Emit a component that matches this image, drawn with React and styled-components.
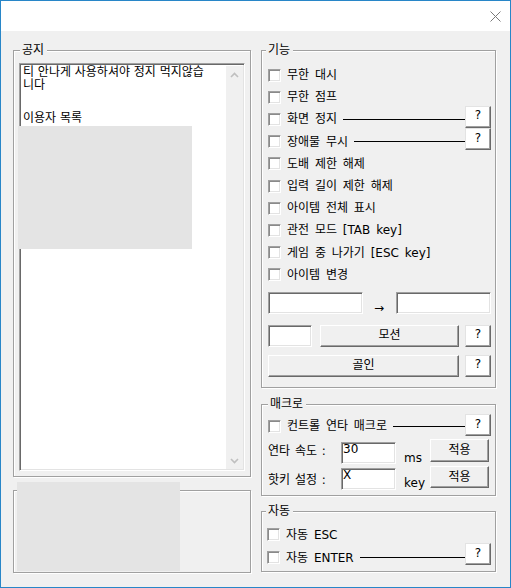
import React from 'react';
import styled, { createGlobalStyle } from 'styled-components';

const Global = createGlobalStyle`
  html, body { margin: 0; padding: 0; background: #fff; }
  body {
    font-family: "DejaVu Sans", "Noto Sans CJK KR", sans-serif;
    font-size: 12px;
    color: #000;
  }
  * { box-sizing: border-box; }
`;

const Window = styled.div`
  width: 511px;
  height: 588px;
  border: 1px solid #2886c8;
  display: flex;
  flex-direction: column;
  background: #f0f0f0;
  overflow: hidden;
`;

const TitleBar = styled.div`
  height: 30px;
  flex: none;
  background: #fff;
  display: flex;
  align-items: center;
  justify-content: flex-end;
  padding-right: 9px;
`;

const Body = styled.div`
  flex: 1;
  display: flex;
  gap: 10px;
  padding: 19px 0 0 12px;
`;

const Column = styled.div`
  display: flex;
  flex-direction: column;
  width: ${p => p.$w}px;
  flex: none;
`;

const Group = styled.div`
  position: relative;
  height: ${p => p.$h}px;
  margin-top: ${p => p.$mt || 0}px;
  border: 1px solid #a0a0a0;
  box-shadow: inset 1px 1px 0 #fff, 1px 1px 0 #fff;
  padding: ${p => p.$pad || '0'};
  display: flex;
  flex-direction: column;
  flex: none;
`;

const Legend = styled.span`
  position: absolute;
  top: -7px;
  left: ${p => p.$x}px;
  padding: 0 3px 0 2px;
  background: #f0f0f0;
  line-height: 12px;
  white-space: nowrap;
`;

const Redact = styled.div`
  position: absolute;
  left: ${p => p.$x}px;
  top: ${p => p.$y}px;
  width: ${p => p.$w}px;
  height: ${p => p.$h}px;
  background: #e4e4e4;
`;

const NoticeBox = styled.div`
  flex: 1;
  display: flex;
  background: #fff;
  border: 1px solid;
  border-color: #a0a0a0 #fff #fff #a0a0a0;
  box-shadow: inset 1px 1px 0 #696969, inset -1px -1px 0 #e3e3e3;
  padding: 2px 1px 1px 2px;
`;

const NoticeText = styled.div`
  flex: 1;
  padding: 0 0 0 1px;
  line-height: 13px;
  white-space: nowrap;
`;

const Para = styled.div`
  margin-top: ${p => p.$mt || 0}px;
`;

const ScrollBar = styled.div`
  width: 17px;
  flex: none;
  background: #f0f0f0;
  display: flex;
  flex-direction: column;
  justify-content: space-between;
`;

const ScrollArrow = styled.div`
  width: 17px;
  height: 17px;
  display: flex;
  align-items: center;
  justify-content: center;
`;

const CheckRow = styled.div`
  display: flex;
  align-items: center;
  height: ${p => p.$h || 22.2}px;
  flex: none;
`;

const Check = styled.span`
  width: 13px;
  height: 13px;
  flex: none;
  background: #fff;
  border: 1px solid;
  border-color: #a0a0a0 #fff #fff #a0a0a0;
  box-shadow: inset 1px 1px 0 #8a8a8a, inset -1px -1px 0 #e3e3e3;
`;

const Label = styled.span`
  margin-left: 6px;
  line-height: 12px;
  white-space: nowrap;
  word-spacing: 2px;
`;

const Rule = styled.span`
  flex: 1;
  height: 1px;
  background: #000;
  margin-left: 6px;
`;

const HelpButton = styled.div`
  width: 26px;
  height: 22px;
  flex: none;
  margin-bottom: ${p => p.$lift ?? 5}px;
  background: #fff;
  border: 1px solid;
  border-color: #e3e3e3 #696969 #696969 #e3e3e3;
  box-shadow: inset -1px -1px 0 #a0a0a0;
  display: flex;
  align-items: center;
  justify-content: center;
  line-height: 12px;
  padding-bottom: 3px;
`;

const PushButton = styled.div`
  width: ${p => p.$w}px;
  height: ${p => p.$h || 22}px;
  margin-top: ${p => p.$mt || 0}px;
  flex: none;
  background: #f0f0f0;
  border: 1px solid;
  border-color: #fff #696969 #696969 #fff;
  box-shadow: inset -1px -1px 0 #a0a0a0;
  display: flex;
  align-items: center;
  justify-content: center;
  line-height: 12px;
  padding-bottom: 1px;
`;

const Field = styled.div`
  width: ${p => p.$w}px;
  height: 22px;
  margin-top: ${p => p.$mt || 0}px;
  flex: none;
  background: #fff;
  border: 1px solid;
  border-color: #a0a0a0 #fff #fff #a0a0a0;
  box-shadow: inset 1px 1px 0 #696969, inset -1px -1px 0 #e3e3e3;
  padding: 1px 2px 0 1px;
  line-height: 10px;
`;

const Row = styled.div`
  display: flex;
  align-items: flex-start;
  gap: ${p => p.$gap || 0}px;
  height: ${p => p.$h}px;
  margin-top: ${p => p.$mt || 0}px;
  flex: none;
`;

const Arrow = styled.span`
  width: 33px;
  flex: none;
  align-self: flex-end;
  text-align: center;
  line-height: 12px;
  padding-right: 1px;
`;

const FieldLabel = styled.span`
  width: 73px;
  flex: none;
  margin-top: ${p => p.$mt}px;
  line-height: 12px;
  white-space: nowrap;
  word-spacing: 1px;
`;

const Unit = styled.span`
  width: 34px;
  flex: none;
  align-self: flex-end;
  margin-bottom: ${p => p.$mb}px;
  padding-left: 8px;
  line-height: 12px;
`;

const Chevron = ({ down }) => (
  <svg width="9" height="6" viewBox="0 0 9 6">
    <polyline
      points={down ? '1,1 4.5,4.5 8,1' : '1,5 4.5,1.5 8,5'}
      fill="none"
      stroke="#bfbfbf"
      strokeWidth="1.6"
    />
  </svg>
);

const CloseIcon = () => (
  <svg width="11" height="11" viewBox="0 0 11 11">
    <path d="M0.5 0.5 L10.5 10.5 M10.5 0.5 L0.5 10.5" stroke="#7a7a7a" strokeWidth="1" fill="none" />
  </svg>
);

const plainRows = [
  '무한 대시',
  '무한 점프',
  { t: '화면 정지', help: true },
  { t: '장애물 무시', help: true },
  '도배 제한 해제',
  '입력 길이 제한 해제',
  '아이템 전체 표시',
  '관전 모드 [TAB key]',
  '게임 중 나가기 [ESC key]',
  '아이템 변경',
];

export default function App() {
  return (
    <>
      <Global />
      <Window>
        <TitleBar>
          <CloseIcon />
        </TitleBar>
        <Body>
          <Column $w={238}>
            <Group $h={427} $pad="12px 5px 5px 5px">
              <Legend $x={6}>공지</Legend>
              <NoticeBox>
                <NoticeText>
                  <Para>
                    티 안나게 사용하셔야 정지 먹지않습
                    <br />
                    니다
                  </Para>
                  <Para $mt={20}>이용자 목록</Para>
                </NoticeText>
                <ScrollBar>
                  <ScrollArrow>
                    <Chevron />
                  </ScrollArrow>
                  <ScrollArrow>
                    <Chevron down />
                  </ScrollArrow>
                </ScrollBar>
              </NoticeBox>
              <Redact $x={4} $y={75} $w={174} $h={123} />
            </Group>
            <Group $h={83} $mt={13}>
              <Redact $x={3} $y={-9} $w={163} $h={89} />
            </Group>
          </Column>

          <Column $w={235}>
            <Group $h={338} $pad="13px 4px 10px 6px">
              <Legend $x={4}>기능</Legend>
              {plainRows.map((r, i) => {
                const t = typeof r === 'string' ? r : r.t;
                const help = typeof r !== 'string' && r.help;
                return (
                  <CheckRow key={i}>
                    <Check />
                    <Label>{t}</Label>
                    {help && (
                      <>
                        <Rule />
                        <HelpButton>?</HelpButton>
                      </>
                    )}
                  </CheckRow>
                );
              })}
              <Row $h={22} $mt={6}>
                <Field $w={95} />
                <Arrow>→</Arrow>
                <Field $w={95} />
              </Row>
              <Row $h={22} $mt={11}>
                <Field $w={44} />
                <PushButton $w={139} style={{ marginLeft: 8 }}>모션</PushButton>
                <HelpButton $lift={0} style={{ marginLeft: 6 }}>?</HelpButton>
              </Row>
              <Row $h={22} $mt={8} $gap={6}>
                <PushButton $w={191}>골인</PushButton>
                <HelpButton $lift={0}>?</HelpButton>
              </Row>
            </Group>

            <Group $h={92} $mt={16} $pad="10px 4px 5px 6px">
              <Legend $x={6}>매크로</Legend>
              <CheckRow $h={22}>
                <Check />
                <Label>컨트롤 연타 매크로</Label>
                <Rule />
                <HelpButton $lift={2}>?</HelpButton>
              </CheckRow>
              <Row $h={25} $mt={2}>
                <FieldLabel $mt={6}>연타 속도 :</FieldLabel>
                <Field $w={55} $mt={3}>30</Field>
                <Unit $mb={0}>ms</Unit>
                <PushButton $w={59} $h={23}>적용</PushButton>
              </Row>
              <Row $h={24} $mt={2}>
                <FieldLabel $mt={8}>핫키 설정 :</FieldLabel>
                <Field $w={55} $mt={2}>X</Field>
                <Unit $mb={1}>key</Unit>
                <PushButton $w={59} $h={22}>적용</PushButton>
              </Row>
            </Group>

            <Group $h={61} $mt={15} $pad="11px 4px 2px 5px">
              <Legend $x={4}>자동</Legend>
              <CheckRow $h={23}>
                <Check />
                <Label>자동 ESC</Label>
              </CheckRow>
              <CheckRow $h={23}>
                <Check />
                <Label>자동 ENTER</Label>
                <Rule />
                <HelpButton $lift={7}>?</HelpButton>
              </CheckRow>
            </Group>
          </Column>
        </Body>
      </Window>
    </>
  );
}
